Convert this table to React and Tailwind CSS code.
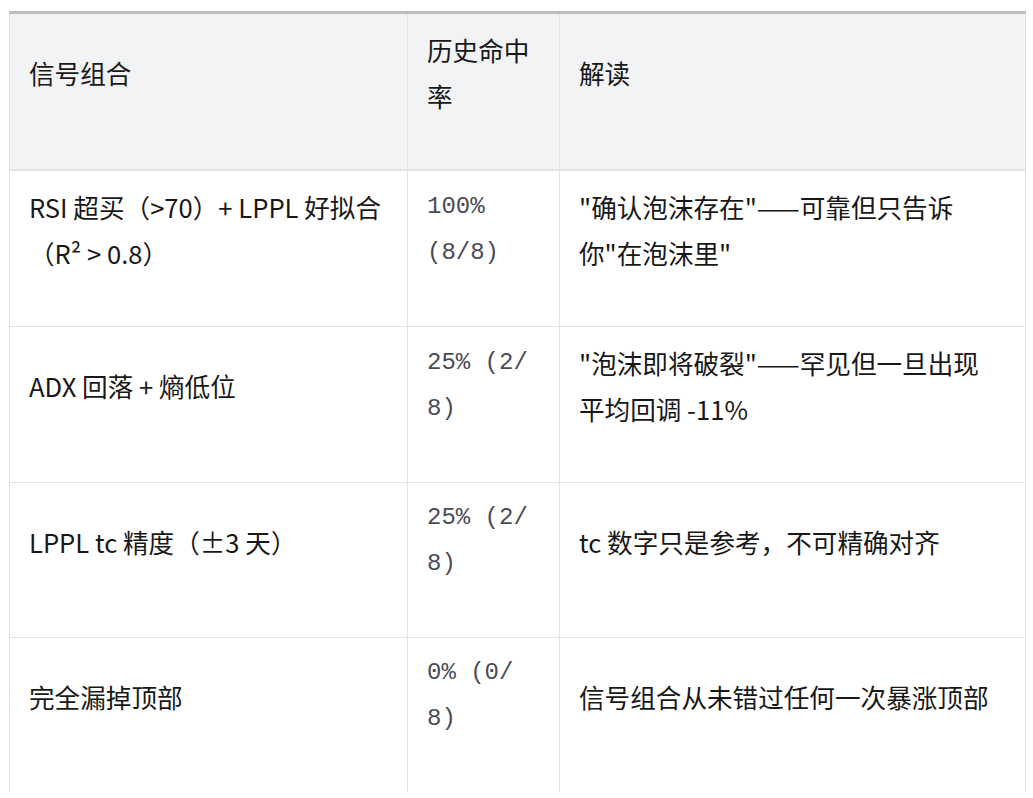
const ROWS = [
  {
    signal: "RSI 超买（>70）+ LPPL 好拟合（R² > 0.8）",
    hit: ["100%", "(8/8)"],
    note: "\"确认泡沫存在\"——可靠但只告诉你\"在泡沫里\"",
  },
  {
    signal: "ADX 回落 + 熵低位",
    hit: ["25%\u00a0(2/", "8)"],
    note: "\"泡沫即将破裂\"——罕见但一旦出现平均回调 -11%",
  },
  {
    signal: "LPPL tc 精度（±3 天）",
    hit: ["25%\u00a0(2/", "8)"],
    note: "tc 数字只是参考，不可精确对齐",
  },
  {
    signal: "完全漏掉顶部",
    hit: ["0%\u00a0(0/", "8)"],
    note: "信号组合从未错过任何一次暴涨顶部",
  },
];

const cell = "border border-[#e3e3e3] pl-[19px] pr-[22px] pt-[13px] pb-[50px] align-middle text-left font-normal";
const head = "border-t-[3px] border-t-[#bdbdbd] border-b-2 pb-[49px]";

export default function App() {
  return (
    <div
      className="min-h-screen bg-white pl-[9px] pt-[11px] text-[#181818]"
      style={{ fontFamily: '"Noto Sans CJK SC", "Noto Sans", sans-serif' }}
    >
      <table className="w-[1016px] table-fixed border-collapse text-[25.6px] leading-[46px]">
        <colgroup>
          <col className="w-[398px]" />
          <col className="w-[152px]" />
          <col className="w-[466px]" />
        </colgroup>
        <thead>
          <tr className="bg-[#f2f3f5]">
            <th className={`${cell} ${head}`}>信号组合</th>
            <th className={`${cell} ${head}`}>历史命中率</th>
            <th className={`${cell} ${head}`}>解读</th>
          </tr>
        </thead>
        <tbody>
          {ROWS.map((row, i) => {
            const last = i === ROWS.length - 1 ? "border-b-0" : "";
            return (
              <tr key={i}>
                <td className={`${cell} ${last}`}>{row.signal}</td>
                <td className={`${cell} ${last}`}>
                  {/* monospace hit-rate, wrapped like the original column */}
                  <code
                    className="block -mt-px text-[24px] leading-[46px] text-[#4a4c55]"
                    style={{ fontFamily: '"Liberation Mono", monospace' }}
                  >
                    {row.hit.map((line) => (
                      <span key={line} className="block">{line}</span>
                    ))}
                  </code>
                </td>
                <td className={`${cell} ${last}`}>{row.note}</td>
              </tr>
            );
          })}
        </tbody>
      </table>
    </div>
  );
}
